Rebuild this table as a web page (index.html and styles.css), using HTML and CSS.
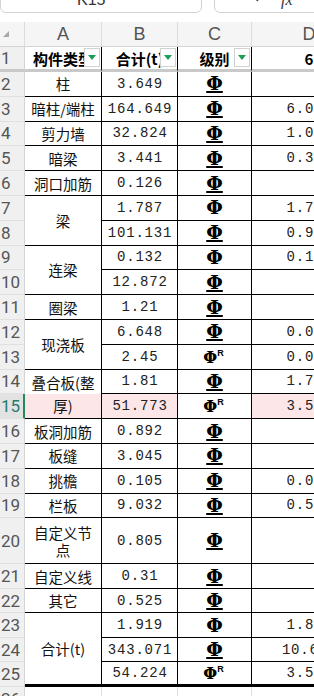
FILE: index.html
```html
<!DOCTYPE html>
<html lang="zh">
<head>
<meta charset="utf-8">
<title>钢筋汇总表</title>
<link rel="stylesheet" href="styles.css">
</head>
<body>
<div class="app">
  <div class="topbar">
    <div class="namebox">K15</div>
    <div class="fxbox">
      <svg class="mag" width="14" height="14" viewBox="0 0 14 14"><circle cx="6" cy="6" r="4.5" fill="none" stroke="#444" stroke-width="1.4"/><line x1="9.3" y1="9.3" x2="13" y2="13" stroke="#444" stroke-width="1.5"/></svg>
      <span class="fx">fx</span>
    </div>
  </div>
  <div class="sheet">
    <div class="corner"><span class="tri"></span></div>
    <div class="ch">A</div><div class="ch">B</div><div class="ch">C</div><div class="ch">D</div>

    <div class="rh r1">1</div>
    <div class="c hd">构件类型<span class="flt"></span></div>
    <div class="c hd">合计(t)<span class="flt"></span></div>
    <div class="c hd">级别<span class="flt"></span></div>
    <div class="c hd">6</div>

    <div class="rh">2</div><div class="c t">柱</div><div class="c n">3.649</div><div class="c"><span class="g g4">Φ</span></div><div class="c n"></div>
    <div class="rh">3</div><div class="c t">暗柱/端柱</div><div class="c n">164.649</div><div class="c"><span class="g g4">Φ</span></div><div class="c n">6.015</div>
    <div class="rh">4</div><div class="c t">剪力墙</div><div class="c n">32.824</div><div class="c"><span class="g g4">Φ</span></div><div class="c n">1.025</div>
    <div class="rh">5</div><div class="c t">暗梁</div><div class="c n">3.441</div><div class="c"><span class="g g4">Φ</span></div><div class="c n">0.314</div>
    <div class="rh">6</div><div class="c t">洞口加筋</div><div class="c n">0.126</div><div class="c"><span class="g g4">Φ</span></div><div class="c n"></div>
    <div class="rh">7</div><div class="c t s2">梁</div><div class="c n">1.787</div><div class="c"><span class="g">Φ</span></div><div class="c n">1.787</div>
    <div class="rh">8</div><div class="c n">101.131</div><div class="c"><span class="g g4">Φ</span></div><div class="c n">0.934</div>
    <div class="rh">9</div><div class="c t s2">连梁</div><div class="c n">0.132</div><div class="c"><span class="g">Φ</span></div><div class="c n">0.132</div>
    <div class="rh">10</div><div class="c n">12.872</div><div class="c"><span class="g g4">Φ</span></div><div class="c n"></div>
    <div class="rh">11</div><div class="c t">圈梁</div><div class="c n">1.21</div><div class="c"><span class="g g4">Φ</span></div><div class="c n"></div>
    <div class="rh">12</div><div class="c t s2">现浇板</div><div class="c n">6.648</div><div class="c"><span class="g g4">Φ</span></div><div class="c n">0.068</div>
    <div class="rh">13</div><div class="c n">2.45</div><div class="c"><span class="g gr">Φ<sup>R</sup></span></div><div class="c n">0.045</div>
    <div class="rh">14</div><div class="c t s2 half wrap2">叠合板(整厚)</div><div class="c n">1.81</div><div class="c"><span class="g g4">Φ</span></div><div class="c n">1.723</div>
    <div class="rh sel">15</div><div class="c n pink">51.773</div><div class="c"><span class="g gr">Φ<sup>R</sup></span></div><div class="c n pink">3.527</div>
    <div class="rh">16</div><div class="c t">板洞加筋</div><div class="c n">0.892</div><div class="c"><span class="g g4">Φ</span></div><div class="c n"></div>
    <div class="rh">17</div><div class="c t">板缝</div><div class="c n">3.045</div><div class="c"><span class="g g4">Φ</span></div><div class="c n"></div>
    <div class="rh">18</div><div class="c t">挑檐</div><div class="c n">0.105</div><div class="c"><span class="g g4">Φ</span></div><div class="c n">0.035</div>
    <div class="rh">19</div><div class="c t">栏板</div><div class="c n">9.032</div><div class="c"><span class="g g4">Φ</span></div><div class="c n">0.553</div>
    <div class="rh">20</div><div class="c t wrap">自定义节点</div><div class="c n">0.805</div><div class="c"><span class="g g4">Φ</span></div><div class="c n"></div>
    <div class="rh">21</div><div class="c t">自定义线</div><div class="c n">0.31</div><div class="c"><span class="g g4">Φ</span></div><div class="c n"></div>
    <div class="rh">22</div><div class="c t">其它</div><div class="c n">0.525</div><div class="c"><span class="g g4">Φ</span></div><div class="c n"></div>
    <div class="rh">23</div><div class="c t s3 last">合计(t)</div><div class="c n">1.919</div><div class="c"><span class="g">Φ</span></div><div class="c n">1.861</div>
    <div class="rh">24</div><div class="c n">343.071</div><div class="c"><span class="g g4">Φ</span></div><div class="c n">10.631</div>
    <div class="rh">25</div><div class="c n last">54.224</div><div class="c last"><span class="g gr">Φ<sup>R</sup></span></div><div class="c n last">3.577</div>

    <div class="rh">26</div><div class="e"></div><div class="e"></div><div class="e"></div><div class="e"></div>
  </div>
</div>
</body>
</html>
```

FILE: styles.css
```css
* { box-sizing: border-box; }
html, body {
  margin: 0;
  padding: 0;
  background: #fff;
  width: 314px;
  height: 696px;
  overflow: hidden;
}
.app {
  width: 314px;
  height: 696px;
  overflow: hidden;
}

/* top bar */
.topbar {
  height: 22px;
  display: flex;
  gap: 12px;
  overflow: hidden;
}
.namebox {
  flex: 0 0 202px;
  height: 24px;
  margin-top: -11px;
  border: 1px solid #d3d3d3;
  border-radius: 6px;
  padding-left: 76px;
  font: 16px/19px "Liberation Sans", Arial, sans-serif;
  color: #333;
}
.fxbox {
  flex: 0 0 140px;
  height: 24px;
  margin-top: -11px;
  border: 1px solid #d3d3d3;
  border-radius: 6px;
  display: flex;
  align-items: flex-start;
  padding-left: 30px;
  gap: 22px;
}
.mag { margin-top: -2px; }
.fx {
  font: italic 16px/19px "Liberation Serif", serif;
  color: #333;
}

/* sheet grid */
.sheet {
  display: grid;
  width: 367px;
  grid-template-columns: 25px 77px 76px 74px 115px;
  grid-template-rows: 25px 25px repeat(18, 24.8px) 46px repeat(5, 24.5px) 25px;
}
.corner {
  background: #f5f5f5;
  border-right: 1px solid #dcdcdc;
  border-bottom: 1px solid #d4d4d4;
  display: flex;
  align-items: center;
  padding-left: 3px;
}
.tri {
  width: 0;
  height: 0;
  border-left: 6px solid transparent;
  border-bottom: 6px solid #a8a8a8;
}
.ch {
  background: #f5f5f5;
  border-right: 1px solid #dcdcdc;
  border-bottom: 1px solid #d4d4d4;
  display: flex;
  align-items: center;
  justify-content: center;
  font: 18px "Liberation Sans", Arial, sans-serif;
  color: #555;
}
.rh {
  background: #f0f0f0;
  border-right: 1px solid #d4d4d4;
  border-bottom: 1px solid #e0e0e0;
  display: flex;
  align-items: center;
  padding-left: 1px;
  font: 17px Roboto, "Liberation Sans", sans-serif;
  color: #555;
  overflow: hidden;
  white-space: nowrap;
}
.rh.r1 { border-bottom: 3px solid #c9c9c9; }
.rh.sel {
  background: #e2e2e2;
  color: #1f7d6e;
  border-right: 2px solid #208a5c;
}

.c {
  border-right: 1px solid #000;
  border-bottom: 1px solid #000;
  display: flex;
  align-items: center;
  justify-content: center;
  text-align: center;
  overflow: hidden;
  min-width: 0;
  color: #111;
}
.hd {
  position: relative;
  border-bottom: 3px solid #c9c9c9;
  font: bold 15px "Noto Sans CJK SC", sans-serif;
  white-space: nowrap;
  color: #000;
}
.flt {
  position: absolute;
  right: 1px;
  top: 1px;
  width: 16px;
  height: 19px;
  background: #fff;
  border: 1px solid #d2d2d2;
  display: flex;
  align-items: center;
  justify-content: center;
}
.flt::after {
  content: "";
  border-left: 4px solid transparent;
  border-right: 4px solid transparent;
  border-top: 5px solid #1e9d58;
}
.t {
  font: 14.5px/17px "Noto Sans CJK SC", sans-serif;
  padding: 0 3px;
  white-space: nowrap;
}
.wrap { white-space: normal; }
.wrap2 { white-space: normal; line-height: 23px; }
.n {
  font: 14px "Liberation Mono", "Courier New", monospace;
  letter-spacing: 0.8px;
  padding-left: 1px;
  color: #222;
  white-space: nowrap;
}
.s2 { grid-row: span 2; }
.s3 { grid-row: span 3; }
.pink { background: #fde6e8; }
.half { background: linear-gradient(#fff 50%, #fde6e8 50%); }
.last { border-bottom: 3px solid #000; }
.e {
  border-right: 1px solid #e0e0e0;
  border-bottom: 1px solid #e0e0e0;
}

/* steel grade glyphs */
.g {
  font: bold 19px/1 "DejaVu Serif", serif;
  color: #000;
}
.g4 {
  text-decoration: underline;
  text-decoration-thickness: 2px;
  text-underline-offset: 1px;
}
.gr {
  font-size: 16px;
  margin-right: 2px;
}
.gr sup {
  font: bold 9px "Liberation Sans", sans-serif;
  vertical-align: 7px;
}
```
